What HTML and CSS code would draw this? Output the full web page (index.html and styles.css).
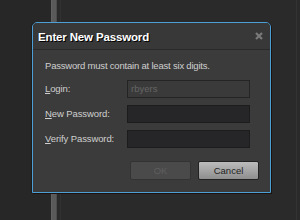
FILE: index.html
```html
<!DOCTYPE html>
<html>
<head>
<meta charset="utf-8">
<link rel="stylesheet" href="styles.css">
</head>
<body>
<div class="dialog">
  <div class="titlebar">
    <span class="title">Enter New Password</span>
    <svg class="close" width="8" height="8" viewBox="0 0 8 8"><path d="M1 1L7 7M7 1L1 7" stroke="#7a7a7a" stroke-width="2.2"/></svg>
  </div>
  <div class="content">
    <div class="msg">Password must contain at least six digits.</div>
    <div class="form">
      <label class="lbl"><u>L</u>ogin:</label>
      <div class="field disabled">rbyers</div>
      <label class="lbl"><u>N</u>ew Password:</label>
      <div class="field"></div>
      <label class="lbl"><u>V</u>erify Password:</label>
      <div class="field"></div>
    </div>
    <div class="buttons">
      <div class="btn ok">OK</div>
      <div class="btn cancel">Cancel</div>
    </div>
  </div>
</div>
</body>
</html>
```
FILE: styles.css
```css
html, body { margin: 0; padding: 0; }
body {
  width: 300px; height: 220px; overflow: hidden; position: relative;
  background: linear-gradient(to right, #272727 0 51px, #626262 51px 52px, #5a5a5a 52px 56px, #4c4c4c 56px 57px, #2a2a2a 57px 60px, #323232 60px 61px, #2a2a2a 61px 296px, #323232 296px 297px, #2a2a2a 297px);
  font-family: "Liberation Sans", Arial, sans-serif;
}
.dialog {
  position: absolute; left: 32px; top: 22px;
  width: 237px; height: 169px;
  border: 1px solid #4b9fd6;
  border-radius: 5px 5px 0 0;
  box-shadow: 1px 1px 0 #1c140c, -1px 0 0 #1c1c1c;
  background: #3b3b3b;
  display: flex; flex-direction: column;
}
.titlebar {
  height: 26px; flex: none;
  display: flex; align-items: center; justify-content: space-between;
  padding: 0 7px 0 5px;
  background: #383838;
  border-radius: 4px 4px 0 0;
  border-bottom: 1px solid #2a2a2a;
}
.title {
  color: #fff; font-weight: bold; font-size: 11.5px;
  letter-spacing: -0.15px;
  text-shadow: 1px 1px 0 #000;
  padding-top: 1px;
}
.close { display: block; }
.content { padding: 9px 11px 0 12px; display: flex; flex-direction: column; }
.msg { color: #cfcfcf; font-size: 9.5px; line-height: 14px; height: 14px; letter-spacing: -0.2px; }
.form {
  margin-top: 7px;
  display: grid; grid-template-columns: 82px 123px;
  row-gap: 7px; align-items: center;
}
.lbl { color: #cfcfcf; font-size: 9.5px; line-height: 14px; letter-spacing: -0.1px; }
.lbl u { text-decoration-thickness: 1px; text-underline-offset: 1px; }
.field {
  height: 16px; border: 1px solid #1c1c1c; background: #262628;
  box-sizing: content-box; font-size: 9.5px; line-height: 16px; color: #666;
  padding-left: 3px; width: 118px;
}
.field.disabled { background: #3a3a3a; border-color: #242424; }
.buttons { margin-top: 13px; display: flex; justify-content: flex-end; gap: 7px; }
.btn {
  width: 59px; height: 17px; border: 1px solid #222; border-radius: 2px;
  font-size: 9.5px; line-height: 17px; text-align: center;
}
.ok { background: #4a4a4a; color: #5e5e5e; border-color: #333; }
.cancel { background: linear-gradient(#bcbcbc, #8e8e8e); color: #222; }
```
